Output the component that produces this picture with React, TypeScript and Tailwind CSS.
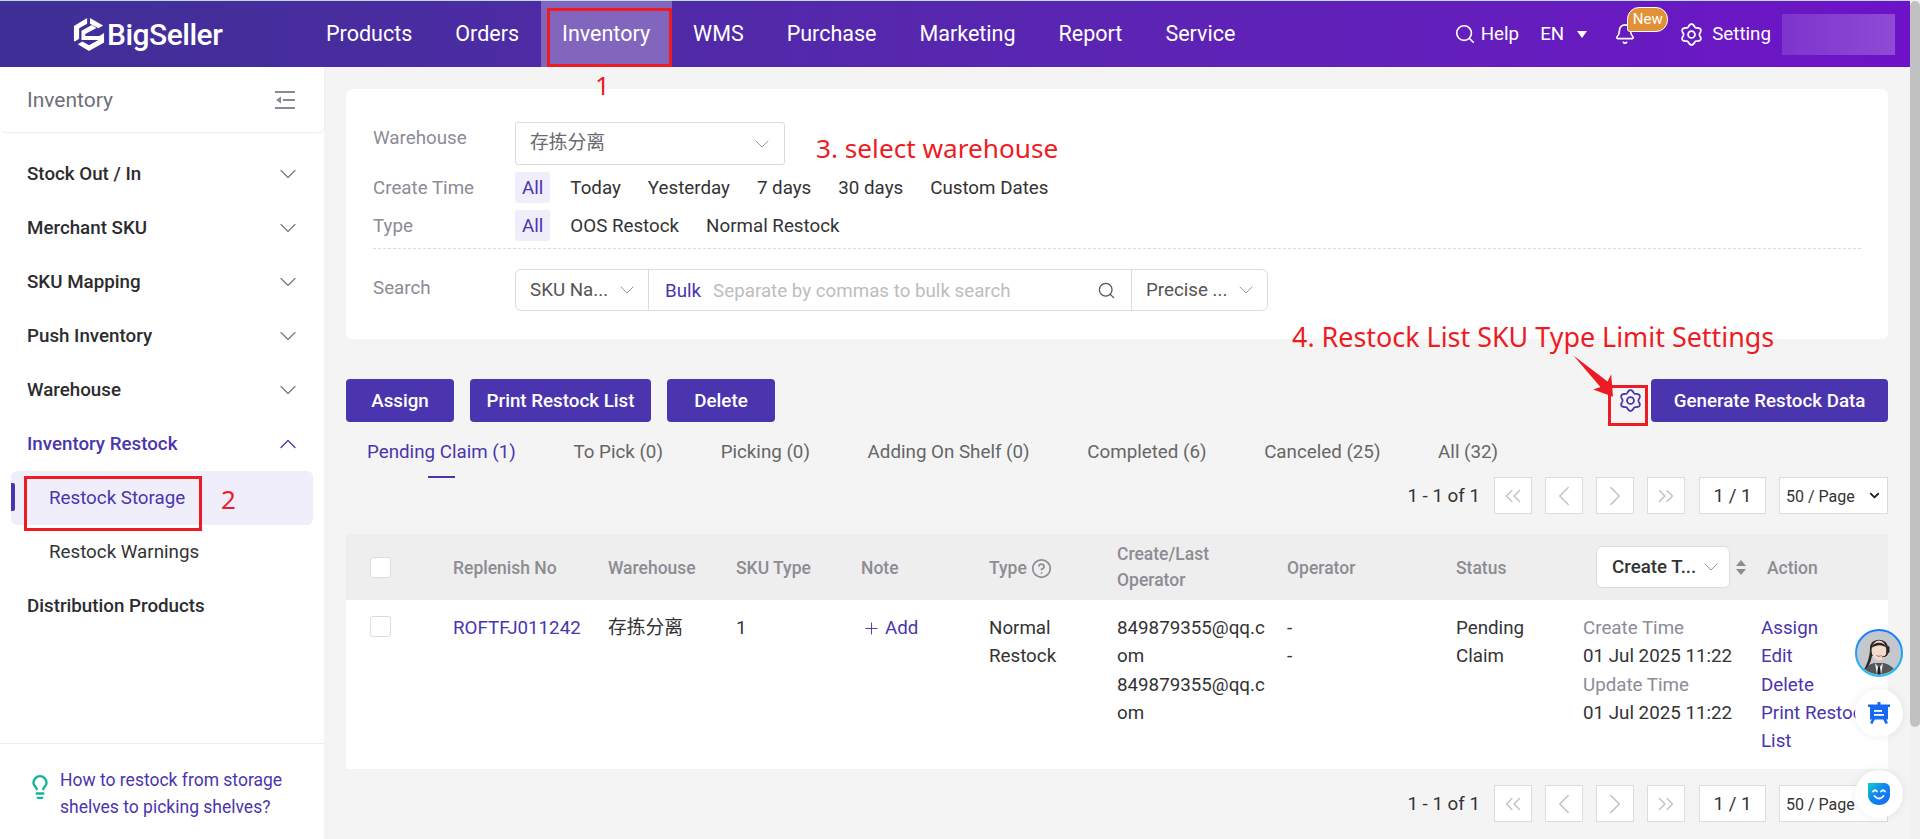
import { ChevronDown, ChevronUp, ChevronLeft, ChevronRight, ChevronsLeft, ChevronsRight, Search, Bell, Plus, CircleHelp, Lightbulb } from "lucide-react";

const flowerPath = (() => {
  const pts: string[] = [];
  for (let i = 0; i < 120; i++) {
    const a = (i / 120) * Math.PI * 2;
    const r = 9.6 + 1.3 * Math.cos(6 * a);
    const x = 12 + r * Math.sin(a);
    const y = 12 - r * Math.cos(a);
    pts.push(`${i === 0 ? "M" : "L"}${x.toFixed(2)} ${y.toFixed(2)}`);
  }
  return pts.join(" ") + "Z";
})();

function Gear({ className }: { className: string }) {
  return (
    <svg viewBox="0 0 24 24" fill="none" stroke="currentColor" strokeWidth="1.9" className={className}>
      <path d={flowerPath} strokeLinejoin="round" />
      <circle cx="12" cy="12" r="3.6" />
    </svg>
  );
}

function Logo() {
  return (
    <svg viewBox="0 0 34 36" className="h-[36px] w-[32px]">
      <path d="M15 1 L15 7 L6.5 12 L6.5 23 L2 26 L1 25.5 L1 9.5 Z" fill="#fff" />
      <path d="M18 1 L32 9 L27 12 L18 7 Z" fill="#fff" />
      <path d="M9 14.5 L20 8.5 L25 11.5 L13 18 L13 20 L28 20 L33 17 L33 27 L17 36 L5 29 L10 26 L17 30 L27 24.5 L9 24.5 Z" fill="#fff" />
    </svg>
  );
}

function Toggle() {
  return (
    <svg viewBox="0 0 20 18" className="h-[18px] w-[20px]" fill="#8a8a92">
      <rect x="0" y="0" width="20" height="2" />
      <rect x="0" y="16" width="20" height="2" />
      <rect x="8" y="8" width="12" height="2" />
      <path d="M1 9 L6 5.5 L6 12.5 Z" />
    </svg>
  );
}

function Avatar() {
  return (
    <svg viewBox="0 0 48 48" className="h-[48px] w-[48px]">
      <defs>
        <linearGradient id="ring" x1="0" y1="0" x2="0" y2="1">
          <stop offset="0" stopColor="#1677ff" />
          <stop offset="1" stopColor="#22c4f5" />
        </linearGradient>
        <clipPath id="face"><circle cx="24" cy="24" r="21.5" /></clipPath>
      </defs>
      <circle cx="24" cy="24" r="23" fill="#c4c8cd" stroke="url(#ring)" strokeWidth="2" />
      <g clipPath="url(#face)">
        <path d="M5 48 C7 39 13 36 19 34 L29 34 C35 36 41 39 43 48 Z" fill="#55555a" />
        <path d="M20 34 L24 39 L28 34 L26 46 L22 46 Z" fill="#f2f2f2" />
        <path d="M23 38 L25 38 L26 46 L22 46 Z" fill="#1e1e22" />
        <path d="M15 19 C15 8 33 8 33 19 C33 23 32.5 26 31.5 27 L17 27 C16 31 15 37 9 41 C12 35 15 28 15 19 Z" fill="#2b2523" />
        <ellipse cx="24" cy="21.5" rx="7.5" ry="10" fill="#f3dacd" />
        <path d="M16.5 19 C18 12 30 12 31.5 19 C28 15.5 22 15 16.5 19 Z" fill="#2b2523" />
        <path d="M20.5 26 Q24 29.5 27.5 26 Q24 27.5 20.5 26" fill="#b5504a" />
        <rect x="31.5" y="17" width="3" height="7" rx="1.5" fill="#2b2523" />
        <path d="M33 24 Q32 28 27 28" stroke="#2b2523" strokeWidth="1" fill="none" />
      </g>
    </svg>
  );
}

function FloatCircle({ children }: { children: React.ReactNode }) {
  return (
    <div className="flex h-[48px] w-[48px] items-center justify-center rounded-full bg-white shadow-[0_0_10px_rgba(0,0,0,0.08)]">
      {children}
    </div>
  );
}

const sideItems = ["Stock Out / In", "Merchant SKU", "SKU Mapping", "Push Inventory", "Warehouse"];
const navItems = ["Products", "Orders", "Inventory", "WMS", "Purchase", "Marketing", "Report", "Service"];
const tabs = ["Pending Claim (1)", "To Pick (0)", "Picking (0)", "Adding On Shelf (0)", "Completed (6)", "Canceled (25)", "All (32)"];
const gridCols = "grid grid-cols-[107px_155px_128px_125px_128px_128px_170px_169px_127px_178px_127px]";

function Pager() {
  const btn = "flex h-[37px] w-[38px] items-center justify-center border border-[#dcdcdc] bg-white text-[#c0c0c6]";
  return (
    <div className="flex h-[37px] items-center justify-end">
      <span className="mr-[14px] pt-[2px] text-[#333]">1 - 1 of 1</span>
      <div className={btn}><ChevronsLeft size={26} strokeWidth={1.3} /></div>
      <div className={`${btn} ml-[13px]`}><ChevronLeft size={34} strokeWidth={1} /></div>
      <div className={`${btn} ml-[13px]`}><ChevronRight size={34} strokeWidth={1} /></div>
      <div className={`${btn} ml-[13px]`}><ChevronsRight size={26} strokeWidth={1.3} /></div>
      <div className="ml-[14px] flex h-[37px] w-[67px] items-center justify-center border border-[#dcdcdc] bg-white pt-[2px] text-[#333]">1 / 1</div>
      <div className="ml-[13px] flex h-[37px] w-[109px] items-center justify-between border border-[#dcdcdc] bg-white pl-[6px] pr-[5px] text-[16px] text-[#333]">
        <span className="pt-[2px]">50 / Page</span>
        <ChevronDown size={15} strokeWidth={3} className="text-[#222]" />
      </div>
    </div>
  );
}

export default function App() {
  return (
    <div className="relative flex h-screen overflow-hidden bg-[#f4f4f4] font-['Roboto','Noto_Sans_CJK_SC',sans-serif] text-[18.75px] text-[#333]">
      <div className="flex min-w-0 flex-1 flex-col">
        {/* top bar */}
        <header className="mt-px flex h-[66px] shrink-0 items-stretch bg-gradient-to-r from-[#3f2f96] to-[#6e12c8] text-white">
          <div className="flex w-[304.5px] items-center gap-[2px] pl-[73px]">
            <Logo />
            <span className="text-[30px] font-medium tracking-[-0.5px]">BigSeller</span>
          </div>
          <nav className="flex">
            {navItems.map((n) => (
              <div key={n} className={`flex items-center px-[21.5px] text-[21.5px] ${n === "Inventory" ? "bg-[#8265bd]" : ""}`}>{n}</div>
            ))}
          </nav>
          <div className="ml-auto flex items-center pr-[15px]">
            <Search size={22} strokeWidth={1.8} />
            <span className="ml-[5px]">Help</span>
            <span className="ml-[21px]">EN</span>
            <span className="ml-[13px] h-0 w-0 border-x-[5px] border-t-[7px] border-x-transparent border-t-white" />
            <div className="relative ml-[27px] h-[22px] w-[20px]">
              <Bell size={22} strokeWidth={1.8} />
              <span className="absolute left-[13px] top-[-16px] flex h-[25px] w-[41px] items-center justify-center rounded-[12px] rounded-bl-[3px] border border-white bg-[#e39136] text-[15px]">New</span>
            </div>
            <Gear className="ml-[46px] h-[23px] w-[23px]" />
            <span className="ml-[9px]">Setting</span>
            <div className="ml-[11px] h-[41px] w-[113px] bg-gradient-to-r from-[#7d34cc] to-[#8f4ad6]" />
          </div>
        </header>

        <div className="flex min-h-0 flex-1">
          {/* sidebar */}
          <aside className="flex w-[324px] shrink-0 flex-col bg-white">
            <div className="flex h-[65px] items-center justify-between rounded-b-[6px] pl-[27px] pr-[29px] text-[21px] text-[#6f6f78] shadow-[0_1px_2px_rgba(0,0,0,0.08)]">
              <span className="pt-[2px]">Inventory</span>
              <Toggle />
            </div>
            <div className="flex-1 pt-[15px]">
              {sideItems.map((s) => (
                <div key={s} className="flex h-[54px] items-center justify-between pl-[27px] pr-[22px] font-medium text-[#2c2c30]">
                  {s}
                  <ChevronDown size={28} strokeWidth={1} className="text-[#77777f]" />
                </div>
              ))}
              <div className="flex h-[54px] items-center justify-between pl-[27px] pr-[22px] font-medium text-[#4a35ae]">
                Inventory Restock
                <ChevronUp size={28} strokeWidth={1.1} className="text-[#4a35ae]" />
              </div>
              <div className="relative ml-[11px] mr-[11px] flex h-[54px] items-center rounded-[6px] bg-[#f0eefb] pl-[38px] text-[#4a35ae]">
                <span className="absolute left-0 top-[12px] h-[28px] w-[4px] rounded-r-[2px] bg-[#4a35ae]" />
                Restock Storage
              </div>
              <div className="flex h-[54px] items-center pl-[49px] text-[#333]">Restock Warnings</div>
              <div className="flex h-[54px] items-center pl-[27px] font-medium text-[#2c2c30]">Distribution Products</div>
            </div>
            <div className="flex h-[96px] border-t border-[#ececec] pl-[27px] pt-[23px]">
              <Lightbulb size={26} strokeWidth={2.2} className="mt-[7px] text-[#12b59a]" />
              <a className="ml-[7px] text-[17.5px] leading-[27px] text-[#4a35ae]">How to restock from storage<br />shelves to picking shelves?</a>
            </div>
          </aside>

          {/* main */}
          <main className="min-w-0 flex-1 pl-[22px] pr-[22px] pt-[22px]">
            <section className="rounded-[6px] bg-white pb-[28px] pl-[27px] pr-[27px] pt-[33px]">
              <div className="flex">
                <div className="w-[142px] pt-[2px] text-[#8c8c96]">Warehouse</div>
                <div className="flex h-[43px] w-[270px] items-center justify-between rounded-[3px] border border-[#dcdcdc] pl-[14px] pr-[10px] text-[#6a6a70]">
                  存拣分离
                  <ChevronDown size={24} strokeWidth={1} className="text-[#999]" />
                </div>
              </div>
              <div className="mt-[7px] flex h-[31px] items-center">
                <div className="w-[142px] pt-[2px] text-[#8c8c96]">Create Time</div>
                <div className="flex gap-[13px]">
                  <span className="rounded-[3px] bg-[#f0eefb] px-[7px] pt-[2px] leading-[29px] text-[#4a35ae]">All</span>
                  {["Today", "Yesterday", "7 days", "30 days", "Custom Dates"].map((t) => (
                    <span key={t} className="px-[7px] pt-[2px] leading-[29px]">{t}</span>
                  ))}
                </div>
              </div>
              <div className="mt-[7px] flex h-[31px] items-center">
                <div className="w-[142px] pt-[2px] text-[#8c8c96]">Type</div>
                <div className="flex gap-[13px]">
                  <span className="rounded-[3px] bg-[#f0eefb] px-[7px] pt-[2px] leading-[29px] text-[#4a35ae]">All</span>
                  {["OOS Restock", "Normal Restock"].map((t) => (
                    <span key={t} className="px-[7px] pt-[2px] leading-[29px]">{t}</span>
                  ))}
                </div>
              </div>
              <div className="mt-[7px] border-t border-dashed border-[#dcdcdc]" />
              <div className="mt-[20px] flex">
                <div className="w-[142px] pt-[5px] text-[#8c8c96]">Search</div>
                <div className="flex h-[42px] w-[753px] items-stretch rounded-[6px] border border-[#dcdcdc]">
                  <div className="flex w-[133px] items-center justify-between border-r border-[#dcdcdc] pl-[14px] pr-[9px] text-[#555]">
                    SKU Na...
                    <ChevronDown size={24} strokeWidth={1} className="text-[#999]" />
                  </div>
                  <div className="flex flex-1 items-center justify-between border-r border-[#dcdcdc] pl-[16px] pr-[15px]">
                    <span className="pt-[2px]"><span className="text-[#4a35ae]">Bulk</span><span className="ml-[12px] text-[#bdbdbd]">Separate by commas to bulk search</span></span>
                    <Search size={19} strokeWidth={1.6} className="text-[#555]" />
                  </div>
                  <div className="flex w-[135px] items-center justify-between pl-[14px] pr-[9px] text-[#555]">
                    Precise ...
                    <ChevronDown size={24} strokeWidth={1} className="text-[#999]" />
                  </div>
                </div>
              </div>
            </section>

            <div className="mt-[40px] flex h-[43px] items-center">
              {["Assign", "Print Restock List", "Delete"].map((b) => (
                <button key={b} className={`flex h-[43px] items-center justify-center rounded-[4px] bg-[#4a35ae] pt-[2px] font-medium text-white ${b === "Print Restock List" ? "ml-[16px] w-[181px]" : b === "Delete" ? "ml-[16px] w-[108px]" : "w-[108px]"}`}>{b}</button>
              ))}
              <Gear className="ml-auto mr-[9px] h-[23px] w-[23px] text-[#4a35ae]" />
              <button className="flex h-[43px] w-[237px] items-center justify-center rounded-[4px] bg-[#4a35ae] pt-[2px] font-medium text-white">Generate Restock Data</button>
            </div>

            <div className="flex h-[56px] gap-[57.7px] pl-[21px] pt-[16px]">
              {tabs.map((t, i) => (
                <div key={t} className="flex flex-col items-center">
                  <span className={`leading-[28px] ${i === 0 ? "text-[#4a35ae]" : "text-[#666]"}`}>{t}</span>
                  {i === 0 && <span className="mt-[10px] h-[2px] w-[27px] bg-[#4a35ae]" />}
                </div>
              ))}
            </div>

            <div className="-mt-px"><Pager /></div>

            <div className={`mt-[20px] h-[66px] items-center bg-[#eeeeee] text-[17.5px] font-medium text-[#8c8c92] ${gridCols}`}>
              <div className="pl-[24px]"><span className="block h-[21px] w-[21px] rounded-[3px] border border-[#dcdcdc] bg-white" /></div>
              <div className="pt-[2px]">Replenish No</div>
              <div className="pt-[2px]">Warehouse</div>
              <div className="pt-[2px]">SKU Type</div>
              <div className="pt-[2px]">Note</div>
              <div className="flex items-center gap-[4px] pt-[2px]">Type <CircleHelp size={21} strokeWidth={2} /></div>
              <div className="leading-[26px]">Create/Last<br />Operator</div>
              <div className="pt-[2px]">Operator</div>
              <div className="pt-[2px]">Status</div>
              <div className="flex items-center">
                <div className="ml-[13px] flex h-[42px] w-[134px] shrink-0 items-center justify-between rounded-[6px] border border-[#dcdcdc] bg-white pl-[15px] pr-[6px] text-[18.75px] text-[#333]">
                  Create T...
                  <ChevronDown size={24} strokeWidth={1} className="text-[#999]" />
                </div>
                <span className="ml-[6px] flex flex-col gap-[3px]">
                  <span className="h-0 w-0 border-x-[5px] border-b-[6px] border-x-transparent border-b-[#8c8c92]" />
                  <span className="h-0 w-0 border-x-[5px] border-t-[6px] border-x-transparent border-t-[#8c8c92]" />
                </span>
              </div>
              <div className="pl-[6px] pt-[2px]">Action</div>
            </div>

            <div className={`h-[169px] overflow-hidden bg-white pt-[14px] leading-[28.3px] ${gridCols}`}>
              <div className="pl-[24px] pt-[2px]"><span className="block h-[21px] w-[21px] rounded-[3px] border border-[#dcdcdc] bg-white" /></div>
              <div className="text-[#4a35ae]">ROFTFJ011242</div>
              <div>存拣分离</div>
              <div>1</div>
              <div className="flex items-start gap-[4px] pl-[1px] text-[#4a35ae]"><Plus size={19} strokeWidth={1.2} className="mt-[5px]" />Add</div>
              <div>Normal<br />Restock</div>
              <div className="break-all pr-[12px]">
                <div>849879355@qq.com</div>
                <div>849879355@qq.com</div>
              </div>
              <div>-<br />-</div>
              <div>Pending<br />Claim</div>
              <div>
                <div className="text-[#8c8c96]">Create Time</div>
                <div>01 Jul 2025 11:22</div>
                <div className="text-[#8c8c96]">Update Time</div>
                <div>01 Jul 2025 11:22</div>
              </div>
              <div className="text-[#4a35ae]">
                <div>Assign</div>
                <div>Edit</div>
                <div>Delete</div>
                <div>Print Restock List</div>
              </div>
            </div>

            <div className="mt-[16px]"><Pager /></div>
          </main>
        </div>
      </div>

      {/* scrollbar */}
      <div className="w-[10px] shrink-0 bg-[#f1f1f1]">
        <div className="mt-[1px] h-[726px] rounded-[5px] bg-[#c1c1c1]" />
      </div>

      {/* top hairline */}
      <div className="absolute left-0 top-0 h-px w-[1910px] bg-[#b9dfe6]" />

      {/* floating buttons */}
      <div className="absolute left-[1855px] top-[629px]"><Avatar /></div>
      <div className="absolute left-[1855px] top-[689px]">
        <FloatCircle>
          <svg viewBox="0 0 24 24" className="h-[24px] w-[24px]">
            <path d="M1 3.5 H23 V6 H21 V18.5 H3 V6 H1 Z" fill="#1668f5" />
            <path d="M10.5 1 H13.5 V4 H10.5 Z M5 18 L8 18 L5.5 23 L3 22 Z M16 18 L19 18 L21 22 L18.5 23 Z" fill="#1668f5" />
            <rect x="7" y="9" width="8" height="1.8" fill="#fff" />
            <rect x="7" y="13" width="10" height="1.8" fill="#fff" />
          </svg>
        </FloatCircle>
      </div>
      <div className="absolute left-[1855px] top-[770px]">
        <FloatCircle>
          <svg viewBox="0 0 24 24" className="h-[24px] w-[24px]">
            <defs>
              <linearGradient id="smile" x1="0" y1="0" x2="1" y2="1">
                <stop offset="0" stopColor="#0fd0c8" />
                <stop offset="0.45" stopColor="#0f86f0" />
                <stop offset="1" stopColor="#1668f5" />
              </linearGradient>
            </defs>
            <path d="M1 1 H17 C20.5 1 23 3.5 23 7 V13 C23 19 18 23 12 23 C6 23 1 19 1 13 Z" fill="url(#smile)" />
            <path d="M6 9.5 Q8 7 10 9.5 M14 9.5 Q16 7 18 9.5 M7.5 14 Q12 19 16.5 14" fill="none" stroke="#fff" strokeWidth="1.8" strokeLinecap="round" />
          </svg>
        </FloatCircle>
      </div>

      {/* annotations */}
      <div className="absolute left-[547px] top-[8px] h-[59px] w-[125px] border-[3px] border-[#ed1c24]" />
      <span className="absolute left-[595px] top-[67px] font-['Noto_Sans',sans-serif] text-[26px] leading-[36px] text-[#ed1c24]">1</span>
      <div className="absolute left-[24px] top-[476px] h-[55px] w-[178px] border-[3px] border-[#ed1c24]" />
      <span className="absolute left-[221px] top-[481px] font-['Noto_Sans',sans-serif] text-[26px] leading-[36px] text-[#ed1c24]">2</span>
      <span className="absolute left-[816px] top-[130px] font-['Noto_Sans',sans-serif] text-[26.2px] leading-[36px] text-[#ed1c24]">3. select warehouse</span>
      <span className="absolute left-[1292px] top-[319px] font-['Noto_Sans',sans-serif] text-[26.9px] leading-[36px] text-[#ed1c24]">4. Restock List SKU Type Limit Settings</span>
      <div className="absolute left-[1608px] top-[385px] h-[41px] w-[40px] border-[3px] border-[#ed1c24]" />
      <svg viewBox="0 0 60 60" className="absolute left-[1568px] top-[350px] h-[54px] w-[54px]">
        <path d="M6 6 L44 35 L48 27 L50 52 L28 44 L36 41 Z" fill="#ed1c24" />
      </svg>
    </div>
  );
}
